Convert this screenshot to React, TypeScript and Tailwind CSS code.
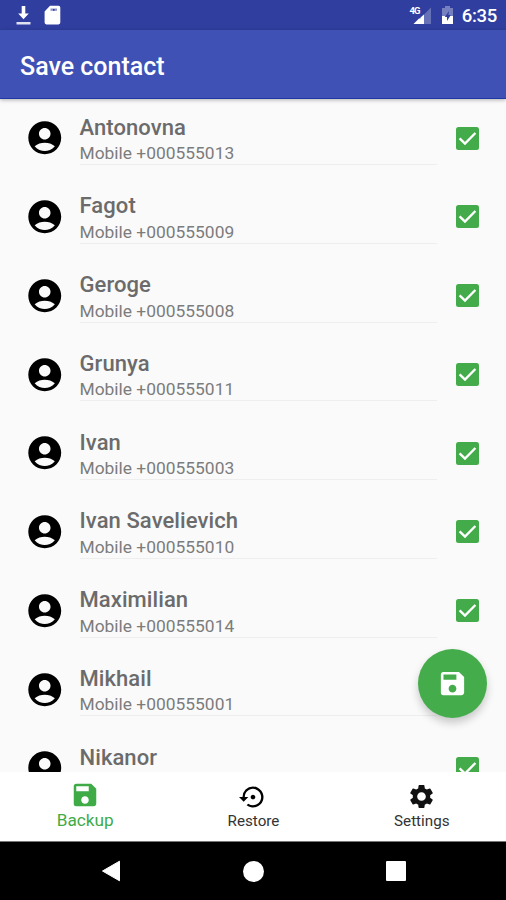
import React from 'react'
import { MdAccountCircle, MdSave, MdSettings, MdSettingsBackupRestore } from 'react-icons/md'

const contacts = [
    { name: 'Antonovna', phone: '+000555013' },
    { name: 'Fagot', phone: '+000555009' },
    { name: 'Geroge', phone: '+000555008' },
    { name: 'Grunya', phone: '+000555011' },
    { name: 'Ivan', phone: '+000555003' },
    { name: 'Ivan Savelievich', phone: '+000555010' },
    { name: 'Maximilian', phone: '+000555014' },
    { name: 'Mikhail', phone: '+000555001' },
    { name: 'Nikanor' },
]

function StatusBar() {
    return (
        <div className="flex h-[30px] shrink-0 items-center justify-between bg-[#303f9f] pl-[15.500px] pr-[9px] text-white">
            <div className="flex items-center gap-[13.500px]">
                {/* download */}
                <svg width="15" height="20" viewBox="0 0 15 20" fill="currentColor">
                    <path d="M5.700 1h3.600v7.500h3.500L7.500 14.300 2.200 8.500h3.500z" />
                    <path d="M0.500 17h14v2.500h-14z" opacity=".85" />
                </svg>
                {/* sd card */}
                <svg width="17" height="20" viewBox="0 0 17 20">
                    <path d="M6 .8h8.500a1.800 1.800 0 0 1 1.800 1.800v15a1.800 1.800 0 0 1-1.800 1.800H2.400a1.800 1.800 0 0 1-1.800-1.800V6.500z" fill="currentColor" />
                    <path d="M6.500 3.500h6.500v2.300H6.500z" fill="#8d96cc" />
                    <path d="M9 4h1.500v1.800H9z" fill="#303f9f" />
                </svg>
            </div>
            <div className="flex items-center">
                {/* signal */}
                <svg width="24" height="20" viewBox="0 0 24 20">
                    <path d="M23 2.500v16.500H6.500z" fill="#6671b8" />
                    <path d="M16 9.500V19H5.500l5.500-5.500h1.500v-1z" fill="#fff" />
                    <text x="1.500" y="9" fontSize="9.500" fontWeight="700" fill="#fff" fontFamily="Roboto, sans-serif" textLength="11">4G</text>
                </svg>
                {/* battery */}
                <svg className="ml-[9px]" width="13" height="20" viewBox="0 0 13 20">
                    <path d="M4 1h5v2h3v8H1V3h3z" fill="#7680bf" />
                    <path d="M1 11h11v8H1z" fill="#fff" />
                    <path d="M8 6 3.800 12H6v4l3.800-6H7.500z" fill="#303f9f" />
                </svg>
                <span className="ml-[8px] pt-[2px] text-[18.500px] font-medium leading-none tracking-[-0.3px]">6:35</span>
            </div>
        </div>
    )
}

function Checkbox() {
    return (
        <svg className="block" width="23" height="23" viewBox="0 0 23 23">
            <rect width="23" height="23" rx="2.500" fill="#43ab4a" />
            <path d="M3.600 11.300 9 16.600 19.400 6" fill="none" stroke="#fff" strokeWidth="2.400" />
        </svg>
    )
}

function ContactRow({ data }: any) {
    return (
        <div className="flex h-[78.750px] shrink-0 items-start pl-[25px] pr-[27px]">
            <MdAccountCircle className="mt-[19.300px] h-[39.500px] w-[39.500px] shrink-0 text-black" />
            <div className="ml-[15px] h-[66px] w-[357px] border-b border-[#eeeeee] pt-[15.500px]">
                {/* name */}
                <div className="text-[22px] font-medium leading-[26px] tracking-[0.08px] text-[#6b6b6b]">{data?.name}</div>
                {/* phone */}
                {
                    data?.phone &&
                    <div className="pt-[1.500px] text-[17.400px] leading-[22px] text-[#7c7c7c]">Mobile {data?.phone}</div>
                }
            </div>
            <div className="ml-auto mt-[27.500px]">
                <Checkbox />
            </div>
        </div>
    )
}

function BottomNav() {
    return (
        <div className="grid h-[70px] shrink-0 grid-cols-3 border-b border-[#777] bg-white pl-px text-[#333]">
            <div className="flex flex-col items-center pt-[8px] text-[#3fab46]">
                <MdSave className="h-[30px] w-[30px]" />
                <span className="text-[17.200px] leading-[20px]">Backup</span>
            </div>
            <div className="flex flex-col items-center pt-[11px]">
                <MdSettingsBackupRestore className="h-[28px] w-[28px] text-black" />
                <span className="text-[15.200px] leading-[20px]">Restore</span>
            </div>
            <div className="flex flex-col items-center pt-[10px]">
                <MdSettings className="h-[29px] w-[29px] text-[#111]" />
                <span className="text-[15.200px] leading-[20px]">Settings</span>
            </div>
        </div>
    )
}

function SystemNav() {
    return (
        <div className="flex h-[58px] shrink-0 items-center justify-between bg-black pl-[101px] pr-[100px]">
            <svg width="20" height="22" viewBox="0 0 20 22">
                <path d="M1.500 11 18.500 1.200v19.600z" fill="#fff" stroke="#fff" strokeLinejoin="round" />
            </svg>
            <div className="h-[21px] w-[21px] rounded-full bg-white" />
            <div className="h-[20px] w-[20px] rounded-[1px] bg-white" />
        </div>
    )
}

export default function App() {
    return (
        <div className="relative flex h-[900px] w-[506px] flex-col overflow-hidden bg-[#fafafa] font-[Roboto,sans-serif]">
            <StatusBar />
            <div className="z-10 flex h-[69px] shrink-0 items-center border-b border-[#2038a4] bg-[#3f51b5] pl-5 pt-[5px] shadow-[0_1px_4px_rgba(0,0,0,0.3)]">
                <h1 className="text-[25px] font-medium leading-none text-white">Save contact</h1>
            </div>
            <div className="flex h-[673px] shrink-0 flex-col overflow-hidden">
                {contacts.map((item: any) => <ContactRow key={item.name} data={item} />)}
            </div>
            <BottomNav />
            <SystemNav />
            {/* save button */}
            <button className="absolute left-[418px] top-[649px] flex h-[69px] w-[69px] items-center justify-center rounded-full bg-[#45ac4b] text-white shadow-[0_5px_8px_rgba(0,0,0,0.2)]">
                <MdSave className="h-[31px] w-[31px]" />
            </button>
        </div>
    )
}
